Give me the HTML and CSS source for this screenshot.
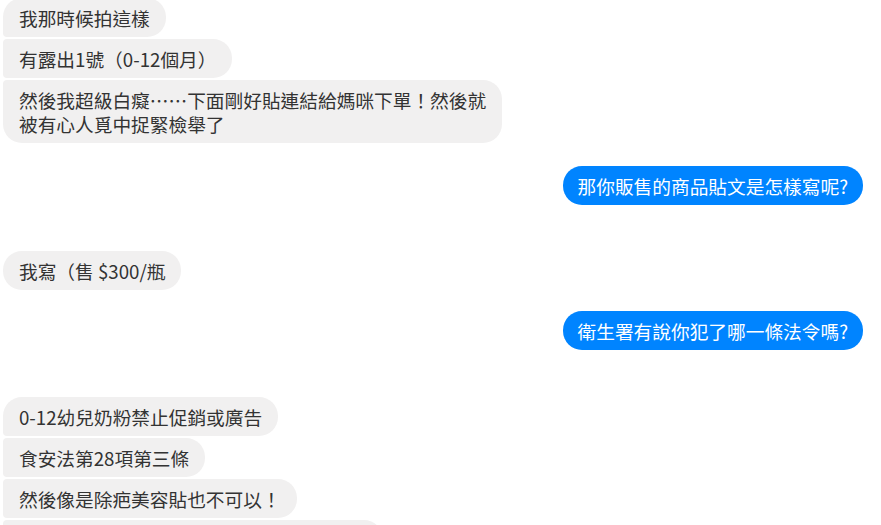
FILE: index.html
```html
<!DOCTYPE html>
<html lang="zh-Hant">
<head>
<meta charset="utf-8">
<link rel="stylesheet" href="styles.css">
</head>
<body>
<div class="chat">
  <div class="group first-group">
    <div class="msg in first"><span class="bubble">我那時候拍這樣</span></div>
    <div class="msg in mid"><span class="bubble">有露出1號（0-12個月）</span></div>
    <div class="msg in last"><span class="bubble">然後我超級白癡……下面剛好貼連結給媽咪下單！然後就<br>被有心人覓中捉緊檢舉了</span></div>
  </div>
  <div class="group out-group g2">
    <div class="msg out"><span class="bubble">那你販售的商品貼文是怎樣寫呢?</span></div>
  </div>
  <div class="group g3">
    <div class="msg in single"><span class="bubble">我寫（售 $300/瓶</span></div>
  </div>
  <div class="group out-group g4">
    <div class="msg out"><span class="bubble">衛生署有說你犯了哪一條法令嗎?</span></div>
  </div>
  <div class="group g5">
    <div class="msg in first"><span class="bubble">0-12幼兒奶粉禁止促銷或廣告</span></div>
    <div class="msg in mid"><span class="bubble">食安法第28項第三條</span></div>
    <div class="msg in mid"><span class="bubble">然後像是除疤美容貼也不可以！</span></div>
    <div class="msg in mid"><span class="bubble cut" aria-hidden="true"></span></div>
  </div>
</div>
</body>
</html>
```
FILE: styles.css
```css
html, body {
  margin: 0;
  padding: 0;
  background: #ffffff;
  overflow: hidden;
}
body {
  width: 881px;
  height: 525px;
  font-family: "Noto Sans CJK TC", "Noto Sans", sans-serif;
  font-size: 18.7px;
  line-height: 24px;
}
.chat {
  display: flex;
  flex-direction: column;
  padding: 0 18px 0 3px;
  margin-top: -2px;
}
.group {
  display: flex;
  flex-direction: column;
  gap: 2px;
}
.g2 { margin-top: 23px; }
.g3 { margin-top: 46px; }
.g4 { margin-top: 21px; }
.g5 { margin-top: 47px; }
.msg {
  display: flex;
}
.msg.out {
  justify-content: flex-end;
}
.bubble {
  display: block;
  padding: 7.5px 16px;
  border-radius: 19px;
  white-space: nowrap;
}
.in .bubble {
  background: #f1f0f0;
  color: #333333;
}
.in.first .bubble {
  border-radius: 19px 19px 19px 4px;
}
.in.mid .bubble {
  border-radius: 4px 19px 19px 4px;
}
.in.last .bubble {
  border-radius: 4px 19px 19px 19px;
}
.out .bubble {
  background: #0084ff;
  color: #ffffff;
  padding: 7.5px 15px;
}
.bubble.cut {
  width: 348px;
  height: 24px;
}
```
